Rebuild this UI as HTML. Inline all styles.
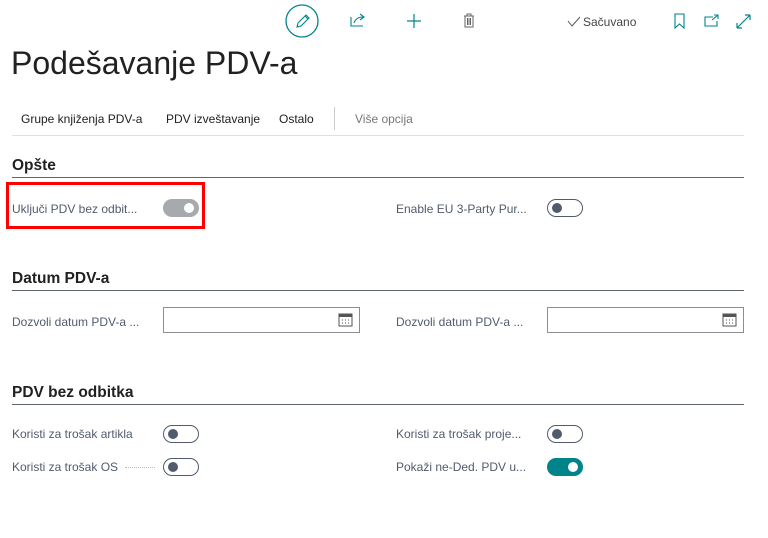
<!DOCTYPE html>
<html><head><meta charset="utf-8"><style>
body{margin:0;width:768px;height:538px;background:#fff;font-family:"Segoe UI","Liberation Sans",sans-serif;color:#212121;position:relative;overflow:hidden}
.a{position:absolute}
.lbl{font-size:12.5px;color:#505c6d;white-space:nowrap}
.h{font-size:15.5px;font-weight:bold;color:#212121}
.line{height:1px;background:#5e6670;left:12px;width:732px}
.tg{width:34px;height:16px;border:1px solid #505c6d;border-radius:10px;box-sizing:content-box}
.tg i{position:absolute;left:4px;top:3px;width:10px;height:10px;border-radius:50%;background:#505c6d}
.tg.on{background:#00848a;border-color:#00848a}
.tg.on i{left:auto;right:4px;background:#fff}
.tg.dis{background:#a6a9ad;border-color:#a6a9ad}
.tg.dis i{left:auto;right:4px;background:#fff}
.inp{width:195px;height:24px;border:1px solid #8a8f96}
.tb{font-size:12.5px;color:#212121}
</style></head><body>
<svg class="a" style="left:0;top:0" width="768" height="45">
<circle cx="302" cy="21" r="16" fill="none" stroke="#00848a" stroke-width="1.3"/>
<path d="M297 27 L298 23 L306 15 L309 18 L301 26 Z M305 16 L308 19" fill="none" stroke="#00848a" stroke-width="1.1"/>
<path d="M351 17 V26 H363 M354 23 Q356 17 363 17 M360 14 L364 17 L360 20" fill="none" stroke="#00848a" stroke-width="1.1"/>
<path d="M414 14 V28 M407 21 H421" stroke="#00848a" stroke-width="1.2"/>
<path d="M464 16 H474 M467 16 V14 H471 V16 M465 16 V27 H473 V16 M467.5 18 V25 M469 18 V25 M470.5 18 V25" fill="none" stroke="#666" stroke-width="1"/>
<path d="M568 21 L572 26 L580 17" fill="none" stroke="#555" stroke-width="1"/>
<path d="M675 14 H684 V28 L679.5 24 L675 28 Z" fill="none" stroke="#00848a" stroke-width="1.1"/>
<path d="M713 17 H705 V26 H717 V21 M714 15 H718 V19 M718 15 L712 20" fill="none" stroke="#00848a" stroke-width="1.1"/>
<path d="M737 28 L750 15 M737 28 V23 M737 28 H742 M750 15 H745 M750 15 V20" fill="none" stroke="#00848a" stroke-width="1.2"/>
</svg>
<div class="a" style="left:583px;top:15px;font-size:12px;color:#444">Sačuvano</div>
<div class="a" style="left:11px;top:45px;font-size:32px;font-weight:300;color:#212121">Podešavanje PDV-a</div>
<div class="a tb" style="left:21px;top:112px;font-size:12px">Grupe knjiženja PDV-a</div>
<div class="a tb" style="left:166px;top:112px;font-size:12px">PDV izveštavanje</div>
<div class="a tb" style="left:279px;top:112px;font-size:12px">Ostalo</div>
<div class="a" style="left:334px;top:107px;width:1px;height:23px;background:#ccc"></div>
<div class="a tb" style="left:355px;top:112px;color:#777;font-size:12px">Više opcija</div>
<div class="a" style="left:12px;top:135px;width:732px;height:1px;background:#e0e0e0"></div>

<div class="a h" style="left:12px;top:157px">Opšte</div>
<div class="a line" style="top:177px"></div>
<div class="a" style="left:6px;top:182px;width:193px;height:41px;border:3px solid #f00"></div>
<div class="a lbl" style="left:12px;top:202px;font-size:12px">Uključi PDV bez odbit...</div>
<div class="a tg dis" style="left:163px;top:199px"><i></i></div>
<div class="a lbl" style="left:396px;top:202px;font-size:12px">Enable EU 3-Party Pur...</div>
<div class="a tg" style="left:547px;top:199px"><i></i></div>

<div class="a h" style="left:12px;top:270px">Datum PDV-a</div>
<div class="a line" style="top:290px"></div>
<div class="a lbl" style="left:12px;top:315px;font-size:12px">Dozvoli datum PDV-a ...</div>
<div class="a inp" style="left:163px;top:307px"></div>
<div class="a lbl" style="left:396px;top:315px;font-size:12px">Dozvoli datum PDV-a ...</div>
<div class="a inp" style="left:547px;top:307px"></div>
<svg class="a" style="left:338px;top:313px" width="16" height="14"><rect x="1" y="1" width="13" height="12" fill="none" stroke="#555"/><rect x="1" y="1" width="13" height="3" fill="#555"/><path d="M4 7h1M7 7h1M10 7h1M4 10h1M7 10h1M10 10h1" stroke="#555"/></svg>
<svg class="a" style="left:722px;top:313px" width="16" height="14"><rect x="1" y="1" width="13" height="12" fill="none" stroke="#555"/><rect x="1" y="1" width="13" height="3" fill="#555"/><path d="M4 7h1M7 7h1M10 7h1M4 10h1M7 10h1M10 10h1" stroke="#555"/></svg>

<div class="a h" style="left:12px;top:384px">PDV bez odbitka</div>
<div class="a line" style="top:404px"></div>
<div class="a lbl" style="left:12px;top:427px;font-size:12px">Koristi za trošak artikla</div>
<div class="a tg" style="left:163px;top:425px"><i></i></div>
<div class="a lbl" style="left:396px;top:427px;font-size:12px">Koristi za trošak proje...</div>
<div class="a tg" style="left:547px;top:425px"><i></i></div>
<div class="a lbl" style="left:12px;top:460px;font-size:12px">Koristi za trošak OS</div>
<div class="a" style="left:125px;top:467px;width:30px;border-top:1px dotted #bbb"></div>
<div class="a tg" style="left:163px;top:458px"><i></i></div>
<div class="a lbl" style="left:396px;top:460px;font-size:12px">Pokaži ne-Ded. PDV u...</div>
<div class="a tg on" style="left:547px;top:458px"><i></i></div>
</body></html>
